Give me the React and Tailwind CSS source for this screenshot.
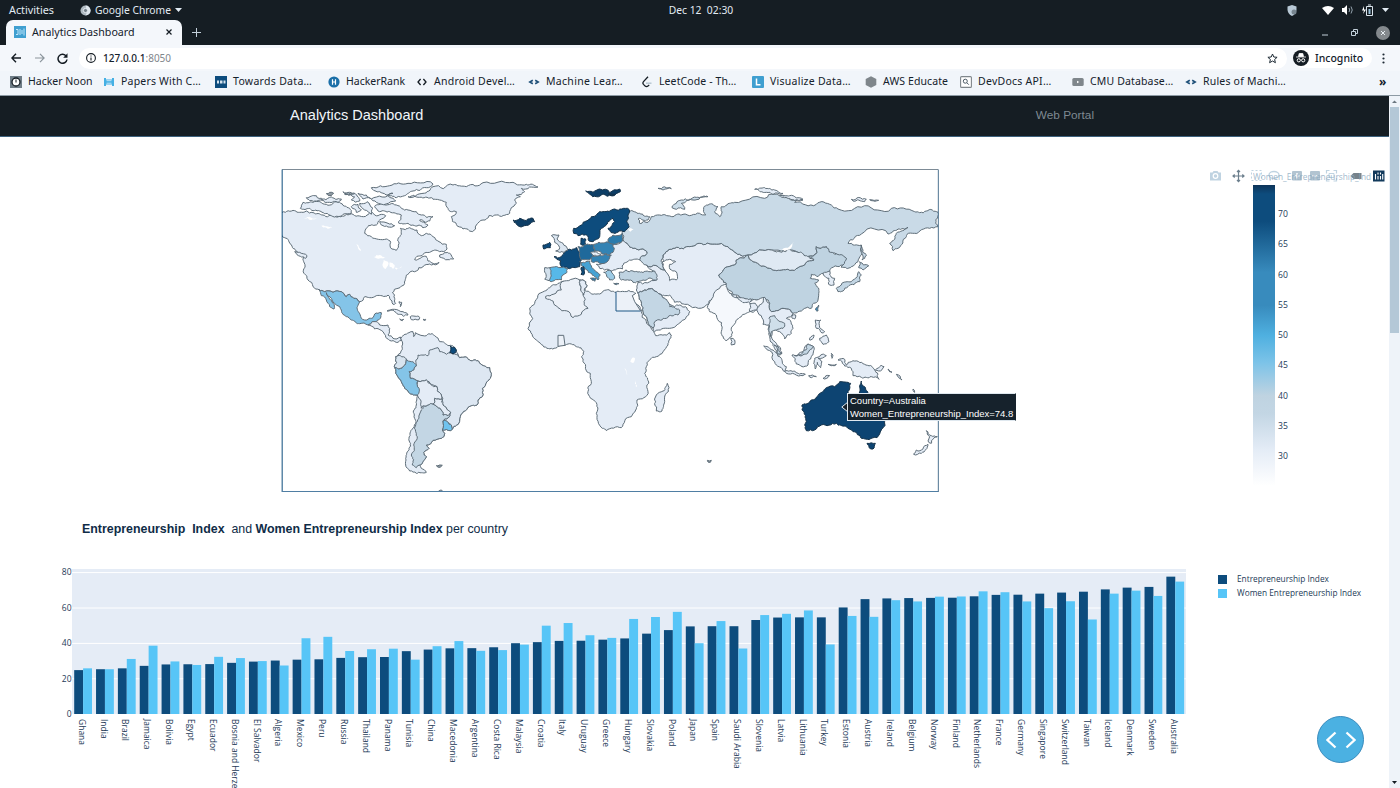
import React from "react";

const UI = "font-['Noto_Sans',sans-serif]";

/* ---------- map geometry ---------- */
const WEST = 0;
const MID = 660;
const EAST = 1305;
const LAND = "#e4ecf6";
const DARK = "#0d4c7d";
const PALE = "#cddeea";

// [x offset, fill, outline points]
const SHAPES = [
  [WEST, LAND, "7,142 45,137 60,142 80,138 100,143 130,150 165,152 200,148 240,153 262,150 270,138 285,150 305,148 318,152 300,165 290,180 262,188 255,205 275,215 320,222 333,232 337,252 350,256 358,235 355,220 365,208 362,190 390,188 412,195 425,212 440,205 460,215 478,230 500,238 502,252 480,260 450,262 430,268 405,284 440,274 445,288 478,292 455,300 430,305 410,318 388,325 378,340 375,355 355,370 338,383 345,400 348,415 340,418 330,400 325,390 290,392 270,398 255,395 240,410 222,400 210,388 200,395 185,380 160,382 135,380 118,374 100,365 85,345 73,325 72,290 72,275 55,262 35,240 15,218 7,213"],
  [WEST, LAND, "385,95 430,85 460,65 520,60 560,65 610,53 700,52 740,58 775,66 725,70 735,80 710,90 722,95 705,105 710,115 700,125 690,145 650,150 610,165 590,180 578,200 550,192 530,178 515,155 530,140 505,130 500,112 480,105 455,98 420,97"],
  [WEST, LAND, "285,125 310,115 350,120 385,135 410,140 425,150 460,155 450,168 420,165 445,180 430,188 405,182 385,175 355,172 365,150 330,140 300,140"],
  [WEST, LAND, "275,68 330,62 385,55 460,57 440,68 400,78 375,92 350,98 320,95 340,85 300,80"],
  [WEST, LAND, "62,130 70,112 100,112 140,118 180,112 210,130 215,145 190,148 150,150 120,138 90,130"],
  [WEST, LAND, "80,98 110,92 130,103 105,108"],
  [WEST, LAND, "125,105 150,97 185,102 180,108 150,112"],
  [WEST, LAND, "195,88 225,85 235,95 240,108 215,105 225,96"],
  [WEST, LAND, "235,85 260,90 275,102 340,100 348,108 290,112 250,102"],
  [WEST, LAND, "240,115 262,110 280,130 275,148 255,135"],
  [WEST, LAND, "215,125 235,118 245,135 230,142"],
  [WEST, LAND, "300,170 325,175 345,182 325,186 305,180"],
  [WEST, "#8f9aa2", "140,86 150,82 162,85 155,92"],
  [WEST, LAND, "190,80 210,82 225,86 200,86"],
  [WEST, LAND, "480,270 495,262 510,265 522,282 505,284 480,276"],
  [WEST, LAND, "45,260 60,262 82,272 78,280 62,274"],
  [WEST, "#84c4e8", "118,374 135,380 160,382 185,380 200,395 210,388 222,400 240,410 236,440 245,460 265,463 280,458 285,447 305,443 302,460 290,470 265,480 240,476 215,465 192,450 185,435 170,420 155,400 140,383 150,402 163,432 150,425 140,405 125,392"],
  [WEST, LAND, "265,480 290,470 300,480 325,480 330,490 325,510 340,520 362,516 366,526 355,532 335,528 318,517 310,500 285,492"],
  [WEST, LAND, "322,438 345,433 370,440 385,450 360,448 345,440"],
  [WEST, LAND, "392,455 420,458 418,464 395,464"],
  [WEST, LAND, "430,463 438,463 437,466"],
  [WEST, LAND, "360,462 372,463 368,467"],
  [WEST, LAND, "358,410 366,412 362,425"],
  [WEST, LAND, "365,525 372,510 388,503 400,500 402,515 407,503 430,512 465,512 480,530 508,542 522,545 530,555 540,578 570,585 600,595 630,608 635,625 622,650 608,670 608,695 592,720 565,727 548,745 540,765 518,792 512,797 488,795 495,805 485,820 460,826 440,840 448,850 432,862 440,875 430,890 420,900 425,910 440,922 410,925 390,918 378,900 378,880 388,850 388,820 400,790 404,750 410,720 413,690 385,678 365,650 345,608 348,575 362,565 368,550"],
  [WEST, "#dde7f2", "535,570 525,567 500,568 480,560 475,548 450,555 445,572 415,570 410,600 388,620 392,640 415,648 440,645 455,658 472,665 485,690 490,720 500,728 513,742 490,768 515,780 518,792 540,765 548,745 565,727 592,720 608,695 608,670 622,650 635,625 630,608 600,595 570,585 540,578"],
  [WEST, "#c3d6e4", "432,722 460,717 485,735 490,750 505,752 513,742 490,768 488,795 495,805 485,820 460,826 440,840 448,850 432,862 440,875 430,890 420,900 410,908 398,900 395,870 402,840 408,800 418,760 425,735"],
  [WEST, LAND, "415,648 440,645 472,665 485,690 487,702 465,700 460,717 432,722 425,730 413,690"],
  [WEST, LAND, "460,717 465,700 487,702 490,720 500,728 513,742 505,752 490,750 485,735"],
  [WEST, "#84c4e8", "345,608 362,610 378,595 380,582 395,590 410,600 388,620 392,640 415,648 418,670 413,690 385,678 365,650"],
  [WEST, "#d8e4ef", "348,575 362,572 380,582 378,595 362,610 345,608"],
  [WEST, "#6fc3ee", "490,768 515,780 518,792 512,797 488,795"],
  [WEST, DARK, "512,543 525,547 530,555 520,567 510,562"],
  [WEST, "#8f9aa2", "470,902 488,901 482,907"],
  [WEST, LAND, "472,981 482,975 490,980"],
  // Africa
  [MID, LAND, "185,350 215,348 240,345 258,350 262,362 255,370 270,382 300,387 320,375 349,382 375,380 400,380 408,385 398,392 405,410 425,440 440,470 462,500 468,512 510,503 515,510 505,540 470,575 440,605 435,625 447,655 445,680 412,705 408,735 395,755 365,788 320,797 308,790 290,745 282,705 267,690 275,650 272,625 250,590 253,560 230,545 215,537 196,541 175,544 142,550 110,525 85,490 90,430 105,415 135,378 158,360"],
  [MID, "#ecf1f8", "187,350 240,345 243,375 252,395 265,430 220,458 175,428 138,400 138,394 185,375"],
  [MID, LAND, "240,345 258,350 262,362 255,370 252,390 243,375"],
  [MID, LAND, "503,655 508,668 495,710 487,738 470,738 465,715 470,690 490,678"],
  // Eurasia
  [MID, LAND, "340,238 370,225 400,250 443,265 420,285 390,285 372,295 368,312 335,318 315,315 290,298 315,290"],
  [MID, LAND, "440,300 495,315 490,270 520,250 560,245 600,235 645,237 685,245 705,262 745,270 710,285 705,300 657,330 680,355 670,385 640,400 620,420 555,418 540,410 525,412 510,390 495,392 470,380 430,378 415,385 410,375 415,352 470,345 465,320 450,312"],
  [MID, "#c9dae7", "388,138 420,145 450,155 445,165 415,162 420,175 445,172 455,155 480,150 520,155 550,148 600,145 618,150 612,128 640,118 655,125 645,140 660,155 665,125 675,125 705,112 795,100 855,92 910,105 885,112 950,118 995,120 1015,132 1095,122 1175,130 1245,140 1260,143 1280,138 1315,142 1315,185 1290,190 1245,205 1222,208 1220,215 1195,250 1180,257 1170,235 1190,205 1225,187 1195,192 1165,207 1085,207 1045,235 1085,240 1085,270 1075,290 1055,305 1025,307 1040,280 1015,270 980,245 950,245 945,270 895,262 815,255 745,270 705,262 685,245 645,237 600,235 560,245 520,250 490,270 490,300 495,315 440,300 420,285 443,265 400,250 370,225 372,180"],
  [MID, "#ffffff", "488,290 510,283 528,290 510,298 515,315 532,325 530,345 510,347 503,325 490,305"],
  [MID, "#bfd3e1", "358,322 400,318 430,323 465,318 472,345 430,345 400,352 365,345"],
  [MID, LAND, "415,385 430,378 470,380 495,400 510,418 540,420 570,440 545,470 510,490 465,500 460,490 440,455 425,420"],
  [MID, "#c3d6e4", "415,385 430,378 470,380 495,400 510,425 540,435 535,450 500,460 465,470 460,490 440,455 425,420"],
  [EAST, "#bfd3e1", "12,330 60,300 65,285 100,270 115,290 165,310 200,315 250,308 298,285 275,275 300,270 305,245 335,245 360,268 395,280 385,300 345,320 325,325 310,335 290,328 287,340 312,345 300,355 313,380 310,405 290,430 250,440 235,445 215,432 190,437 170,440 165,415 150,400 125,405 80,400 55,388 35,370 35,355"],
  [EAST, "#dfe9f3", "100,270 170,255 200,262 250,262 275,272 298,285 250,308 200,315 165,310 115,290"],
  [EAST, "#f5f8fc", "15,370 35,358 45,385 60,395 105,410 125,405 150,397 130,430 105,440 80,455 52,485 50,515 35,528 20,500 5,450 -15,440 -22,428 -10,405"],
  [EAST, LAND, "50,388 80,398 110,402 105,412 75,405"],
  [EAST, LAND, "105,415 122,415 128,435 105,440"],
  [EAST, LAND, "128,428 150,397 165,415 170,440 190,437 215,432 235,445 215,460 235,490 230,505 210,522 195,500 170,495 170,515 185,535 202,565 190,570 178,545 165,515 165,480 145,478"],
  [EAST, "#cfdfea", "163,460 180,452 192,468 210,475 205,490 185,495 170,500 168,515 163,490"],
  [EAST, "#c3d6e4", "178,540 190,545 202,565 188,568"],
  [EAST, LAND, "325,325 345,318 345,330 360,340 358,360 342,358 343,340"],
  [EAST, "#c3d6e4", "365,370 380,360 410,350 428,335 432,320 440,330 435,350 400,365 385,378 370,380"],
  [EAST, "#c3d6e4", "435,290 462,303 445,315 432,308"],
  [EAST, "#c9dae7", "440,240 445,262 455,272 442,285 440,262"],
  [EAST, "#388bbd", "305,428 312,420 310,438 303,435"],
  [EAST, LAND, "232,452 243,450 240,462 233,460"],
  [EAST, LAND, "48,520 60,525 60,538 50,540"],
  [EAST, LAND, "147,543 165,550 200,580 215,605 210,620 180,590"],
  [EAST, LAND, "210,618 240,618 272,628 265,632 215,625"],
  [EAST, LAND, "232,570 250,570 280,537 297,545 290,575 280,600 245,597"],
  [EAST, "#c3d6e4", "240,572 265,560 280,537 297,545 285,555 262,572"],
  [EAST, LAND, "300,580 318,570 335,572 310,580 322,590 318,608 308,592 302,612 297,595"],
  [EAST, LAND, "350,565 355,570 352,580"],
  [EAST, LAND, "340,598 365,598 350,602"],
  [EAST, LAND, "282,632 305,635 290,638"],
  [EAST, LAND, "325,640 345,632 330,642"],
  [EAST, LAND, "302,465 318,465 315,488 330,500 322,504 305,490"],
  [EAST, LAND, "315,520 335,510 343,530 325,538"],
  [EAST, LAND, "285,525 298,510 288,525"],
  [EAST, LAND, "370,585 390,583 395,600 410,590 450,598 480,615 493,643 470,635 440,637 415,632 410,610 390,603"],
  [EAST, LAND, "482,615 500,600 508,605 492,618"],
  [EAST, LAND, "520,612 532,622 525,620"],
  [EAST, LAND, "545,628 562,645 552,638"],
  [EAST, LAND, "595,672 600,682 597,680"],
  [EAST, "#0d4472", "262,720 290,705 310,692 335,668 360,665 375,650 408,655 400,680 425,695 435,680 440,648 450,665 465,690 480,710 510,770 500,795 487,818 440,820 415,800 395,785 365,775 320,780 300,795 275,797 270,780 275,770 262,735"],
  [EAST, "#0d4472", "457,835 482,835 475,852 465,850"],
  [EAST, LAND, "635,797 650,812 668,815 650,835 640,828 645,815"],
  [EAST, LAND, "640,838 620,865 597,868 605,855"],
  [EAST, LAND, "120,73 150,68 180,75 205,85 175,88 155,82"],
  [EAST, LAND, "195,90 225,92 265,103 240,106 210,98"],
  [EAST, LAND, "410,103 455,103 450,110 415,108"],
  [EAST, LAND, "465,104 492,106 480,109"],
  // Europe
  [MID, DARK, "222,190 245,180 275,155 310,140 345,132 388,133 385,150 388,185 375,200 335,203 325,190 345,170 340,160 325,170 305,190 300,215 280,230 268,228 260,210 235,212 222,205"],
  [MID, DARK, "244,220 258,222 256,240 243,238"],
  [MID, DARK, "163,275 185,275 215,255 232,248 240,262 245,285 240,305 205,310 185,305 183,287"],
  [MID, "#1f699b", "235,245 262,237 282,240 285,258 280,277 245,285 240,262"],
  [MID, "#3383b4", "282,238 315,233 340,238 340,262 330,270 285,258"],
  [MID, "#2b7bac", "325,230 340,210 368,205 368,228 345,238"],
  [MID, "#3383b4", "275,277 305,272 335,270 325,288 300,295 275,290"],
  [MID, "#e9eff7", "272,263 290,260 305,267 295,273 280,272"],
  [MID, "#57b8e8", "150,308 205,310 190,330 185,345 150,348"],
  [MID, "#d3e1ed", "135,308 150,308 148,347 135,342"],
  [MID, "#45a2d3", "240,290 270,288 272,298 285,315 302,330 295,345 285,335 262,315 245,302"],
  [MID, DARK, "244,308 252,305 252,330 244,328"],
  [MID, "#2b7bac", "272,340 290,342 285,349"],
  [MID, "#9dcbe5", "312,322 335,318 345,340 330,345"],
  [MID, "#2b7bac", "342,355 358,356 350,359"],
  [MID, "#dbe6f1", "155,212 178,210 172,222 190,235 205,255 180,262 168,258 180,248 165,232"],
  [MID, DARK, "130,240 150,232 152,248 132,252"],
  [MID, "#0d3e66", "40,165 60,160 100,160 105,170 90,178 50,177"],
  [MID, "#0d3e66", "258,78 300,72 360,72 362,80 310,87 290,95 270,88"],
  [MID, "#0d3e66", "325,86 345,88 335,91"],
  [MID, PALE, "517,128 545,105 590,97 625,95 580,105 545,115 555,133 530,133"],
  [MID, PALE, "475,70 515,71 490,75"],
  [MID, "#8f9aa2", "623,886 635,886 632,892 625,891"],
];

const LAKES = [
  "72,160 95,158 112,162 95,165", "125,182 140,184 158,188 140,188", "230,238 240,250 244,258 236,252",
  "283,276 300,270 318,276 302,280", "312,285 325,290 318,312 310,305", "330,292 345,300 340,312 330,305", "345,308 368,304 350,314",
  "1058,578 1066,580 1060,594 1052,590", "1035,608 1044,628 1040,628", "1067,645 1072,666 1068,664",
  "1500,253 1525,248 1543,230 1535,248 1515,258", "1045,190 1062,192 1052,200",
];

const noise = (a, b, c, d) => {
  const s = Math.sin(a * 12.9898 + b * 78.233 + c * 37.719 + d * 4.581) * 43758.5453;
  return s - Math.floor(s) - 0.5;
};

// Splits an edge at displaced midpoints; the result is the same in both directions,
// so neighbouring countries share one border.
function split(p, q, depth, out) {
  const dx = q[0] - p[0];
  const dy = q[1] - p[1];
  const len = Math.hypot(dx, dy);
  if (depth === 0 || len < 7) {
    out.push(q);
    return;
  }
  const forward = p[0] < q[0] || (p[0] === q[0] && p[1] < q[1]);
  const [a, b] = forward ? [p, q] : [q, p];
  const n = noise(a[0], a[1], b[0], b[1]) * 0.4 * (forward ? 1 : -1);
  const m = [(p[0] + q[0]) / 2 - dy * n, (p[1] + q[1]) / 2 + dx * n];
  split(p, m, depth - 1, out);
  split(m, q, depth - 1, out);
}

function coast(dx, text) {
  const pts = text.split(" ").map((s) => {
    const [x, y] = s.split(",").map(Number);
    return [x + dx, y];
  });
  const out = [];
  pts.forEach((p, i) => split(p, pts[(i + 1) % pts.length], 3, out));
  return "M" + out.map((p) => p[0].toFixed(1) + "," + p[1].toFixed(1)).join("L") + "Z";
}

function WorldMap() {
  return (
    <svg width="659" height="326" viewBox="4 9 1977 978" className="block">
      <clipPath id="frame"><rect x="7" y="12" width="1970" height="969" /></clipPath>
      <g clipPath="url(#frame)" strokeLinejoin="round">
        {SHAPES.map(([dx, fill, pts], i) => (
          <path key={i} d={coast(dx, pts)} fill={fill} strokeWidth="3" stroke={fill.startsWith("#0d") ? "#14324a" : "#5f6e79"} />
        ))}
        <path d="M1009,382V438H1083L1058,392L1068,383Z" fill="#ecf1f8" />
        <path d="M1009,380V438H1083" fill="none" stroke="#1d5685" strokeWidth="3" />
        <path d="M1083,438L1065,410L1058,392L1068,385" fill="none" stroke="#5f6e79" strokeWidth="3" />
        <path d="M835,511H852L856,541L835,544Z" fill="#ecf1f8" stroke="#5f6e79" strokeWidth="3" />
        {LAKES.map((l) => <path key={l} d={coast(0, l)} fill="#fff" />)}
      </g>
      <path d="M7.500 13.500H1975.500" stroke="#7d8b96" strokeWidth="3" />
      <path d="M7.500 13.500V981" stroke="#0d4c7d" strokeWidth="3" />
      <path d="M7.500 979.500H1975.500" stroke="#4f7ea3" strokeWidth="3" />
      <path d="M1976 13.500V981" stroke="#4f7491" strokeWidth="3" />
    </svg>
  );
}

/* ---------- bar chart ---------- */
const ROWS = [
  ["Ghana", 24.8, 25.8], ["India", 25.3, 25.3], ["Brazil", 25.8, 31.1], ["Jamaica", 27.2, 38.6], ["Bolivia", 28, 29.7],
  ["Egypt", 28.1, 27.7], ["Ecuador", 28.2, 32.3], ["Bosnia and Herze", 28.9, 31.6], ["El Salvador", 29.6, 29.9],
  ["Algeria", 30.2, 27.4], ["Mexico", 30.7, 42.8], ["Peru", 30.9, 43.6], ["Russia", 31.7, 35.6], ["Thailand", 32.1, 36.6],
  ["Panama", 32.2, 36.9], ["Tunisia", 35.5, 30.7], ["China", 36.4, 38.3], ["Macedonia", 37.1, 41.2], ["Argentina", 37.2, 35.7],
  ["Costa Rica", 37.7, 36.1], ["Malaysia", 40, 39.2], ["Croatia", 40.6, 49.9], ["Italy", 41.3, 51.4], ["Uruguay", 41.4, 44.5],
  ["Greece", 42, 43], ["Hungary", 42.7, 53.7], ["Slovakia", 45.4, 54.8], ["Poland", 47.4, 57.7], ["Japan", 49.5, 40],
  ["Spain", 49.6, 52.5], ["Saudi Arabia", 49.6, 37], ["Slovenia", 53.1, 55.9], ["Latvia", 54.5, 56.6], ["Lithuania", 54.6, 58.5],
  ["Turkey", 54.6, 39.3], ["Estonia", 60.2, 55.4], ["Austria", 64.9, 54.9], ["Ireland", 65.3, 64.3], ["Belgium", 65.5, 63.6],
  ["Norway", 65.6, 66.3], ["Finland", 65.7, 66.4], ["Netherlands", 66.5, 69.3], ["France", 67.3, 68.8], ["Germany", 67.4, 63.6],
  ["Singapore", 68, 59.8], ["Switzerland", 68.6, 63.7], ["Taiwan", 69.1, 53.4], ["Iceland", 70.4, 68], ["Denmark", 71.4, 69.7],
  ["Sweden", 71.8, 66.7], ["Australia", 77.6, 74.8],
];

function BarChart() {
  const step = 1114 / 51;
  const k = 1.77;
  const base = 154;
  return (
    <svg width="1200" height="228" className="block font-['Open_Sans',sans-serif] text-[8.5px]" fill="#1d3a57">
      <rect x="72" y="9" width="1114" height="145" fill="#e5ecf6" />
      {[20, 40, 60, 80].map((v) => (
        <line key={v} x1="72" x2="1186" y1={base + 0.2 - v * k} y2={base + 0.2 - v * k} stroke="#fff" />
      ))}
      {ROWS.map(([name, a, b], i) => {
        const x = 72 + i * step + 2.2;
        return (
          <g key={name}>
            <rect x={x} y={base - a * k} width="8.9" height={a * k} fill="#0d4c7d" />
            <rect x={x + 8.9} y={base - b * k} width="8.9" height={b * k} fill="#57c5f7" />
            <text transform={`translate(${x + 4.6} 159) rotate(90)`}>{name}</text>
          </g>
        );
      })}
      {[0, 20, 40, 60, 80].map((v) => (
        <text key={v} x="71.500" y={base + 3 - v * k} textAnchor="end">{v}</text>
      ))}
    </svg>
  );
}

/* ---------- browser chrome ---------- */
function Mark({ kind }) {
  const p = { width: 12, height: 12, viewBox: "0 0 12 12", className: "shrink-0" };
  switch (kind) {
    case "clock":
      return <svg {...p}><rect width="12" height="12" fill="#6f7d87" /><circle cx="6" cy="6" r="4" fill="#fff" stroke="#141c23" strokeWidth="1.3" /><path d="M6 3.5V6.5" stroke="#141c23" /></svg>;
    case "papers":
      return <svg {...p}><path d="M1 2h2v1.500h6V2h2v8H9V8.500H3V10H1Z" fill="#45b0e4" /><path d="M3.500 4.700h5M3.500 7.200h5" stroke="#e4f3fb" strokeWidth=".8" /></svg>;
    case "tds":
      return <svg {...p}><rect width="12" height="12" fill="#0d4c7d" /><path d="M2 4.500h2v3H2zM5 4.500h2.500v3H5zM8.500 4.500h2v3h-2z" fill="#d6e4ef" /></svg>;
    case "hrank":
      return <svg {...p}><circle cx="6" cy="6" r="5.600" fill="#1b6fa8" /><path d="M4.500 3.200v5.600M7.500 3.200v5.600M4.500 6h3" stroke="#fff" strokeWidth="1.200" /></svg>;
    case "code":
      return <svg {...p}><path d="M4.600 3 2 6l2.600 3M7.400 3 10 6 7.400 9" fill="none" stroke="#141c23" strokeWidth="1.300" /></svg>;
    case "arrows":
      return <svg {...p}><path d="M4.800 4.200 1.800 6l3 1.800M7.200 4.200 10.200 6l-3 1.800" fill="none" stroke="#1d4f78" strokeWidth="1.600" /></svg>;
    case "leet":
      return <svg {...p}><path d="M7 .8 2.500 5.600q-1.200 1.400 0 2.800l1.600 1.700q1.400 1.200 2.900 0l1.200-1.200" fill="none" stroke="#141c23" strokeWidth="1.300" /><path d="M5 7.200h5.500" stroke="#b4c4d0" strokeWidth="1.400" /></svg>;
    case "viz":
      return <svg {...p}><rect width="12" height="12" rx="1" fill="#3f9fd0" /><path d="M4.500 2.500v6.300h4" fill="none" stroke="#fff" strokeWidth="1.500" /></svg>;
    case "hex":
      return <svg {...p}><path d="M6 .3 11.300 3v6L6 11.700.7 9V3Z" fill="#7f868b" /></svg>;
    case "docs":
      return <svg {...p}><rect x=".6" y=".6" width="10.800" height="10.800" rx="1" fill="#fff" stroke="#7f868b" strokeWidth="1.100" /><circle cx="5.300" cy="5.200" r="2" fill="none" stroke="#4d5b66" /><path d="m6.800 6.700 2 2" stroke="#4d5b66" /></svg>;
    default:
      return <svg {...p}><rect x=".3" y="2" width="11.400" height="8" rx="1.500" fill="#7f868b" /><path d="M5 4.700 7.300 6 5 7.300Z" fill="#fff" /></svg>;
  }
}

function Bookmark({ kind, label, className }) {
  return (
    <div className={"flex shrink-0 items-center gap-1.5 " + className}>
      <Mark kind={kind} />
      <span className="whitespace-pre">{label}</span>
    </div>
  );
}

function Browser() {
  return (
    <div className={UI + " text-[10.5px] leading-none text-[#14212b]"}>
      <div className="grid h-5 grid-cols-3 items-center bg-[#151d23] text-[10.3px] text-[#e2ebf3]">
        <div className="flex items-center pl-[9px]">
          <span className="w-[71px] text-[10.8px]">Activities</span>
          <svg width="11" height="11" viewBox="0 0 12 12" className="mr-1"><circle cx="6" cy="6" r="5.500" fill="#aeb9c1" /><path d="M6 .5a5.500 5.500 0 0 1 0 11L8 7Z" fill="#dfe7ee" /><circle cx="6" cy="6" r="2.300" fill="#76828b" stroke="#e8eef4" /></svg>
          <span>Google Chrome</span>
          <svg width="7" height="4" className="ml-1"><path d="M0 0h7L3.500 4Z" fill="#e2ebf3" /></svg>
        </div>
        <div className="pl-0.5 text-center whitespace-pre">{"Dec 12  02:30"}</div>
        <div className="flex items-center justify-end pr-[11px]">
          <svg width="11" height="11" viewBox="0 0 11 11" className="mr-[24px]"><path d="M5 0 9.500 1.500V5Q9 9 5 11 1 9 .5 5V1.500Z" fill="#b8c9d6" /><circle cx="7" cy="7" r="2.500" fill="#77858f" /></svg>
          <svg width="12" height="9" className="mr-[8px]"><path d="M0 2Q6-2 12 2L6 9Z" fill="#fff" /></svg>
          <svg width="12" height="10" className="mr-2"><path d="M0 3h2l3-3v10L2 7H0Z" fill="#fff" /><path d="M7 3q1.500 2 0 4M9 1.500q2.500 3.500 0 7" fill="none" stroke="#93a2ad" /></svg>
          <svg width="11" height="12" className="mr-[9px]"><path d="M2 2 0 6.500h2L1 10l3-4.500H2Z" fill="#fff" /><path d="M4.500 2.500h6v9h-6zM6 1h3" fill="none" stroke="#dce6ee" /><path d="M6.500 5h2v5h-2z" fill="#9cc4dc" /></svg>
          <svg width="7" height="4"><path d="M0 0h7L3.500 4Z" fill="#e2ebf3" /></svg>
        </div>
      </div>

      <div className="flex h-[25px] items-center bg-[#151d23]">
        <div className="ml-1.5 flex h-full w-[176px] items-center rounded-t-[7px] bg-[#f4f7fb] pr-2.5 pb-px pl-2 text-[10.7px]">
          <svg width="12" height="12" className="mr-1.5"><rect width="12" height="12" fill="#3f9fd0" /><path d="M2 3.500h2v5H2M6 3v6M8 4v4M10 2.500v7" fill="none" stroke="#bfe6fa" /></svg>
          <span className="flex-1">Analytics Dashboard</span>
          <svg width="6" height="6" viewBox="0 0 6 6"><path d="m.5.5 5 5m0-5-5 5" stroke="#141c23" strokeWidth="1.200" /></svg>
        </div>
        <svg width="9" height="9" className="ml-[10px]"><path d="M4.500 0v9M0 4.500h9" stroke="#c3d0da" /></svg>
        <div className="ml-auto flex items-center pr-[10px]">
          <svg width="6" height="2" className="mt-1 mr-[23px]"><path d="M0 1h6" stroke="#c3d0da" /></svg>
          <svg width="7" height="7" className="mr-[18px]"><path d="M.5 2.500h4v4h-4zM2.500 2V.5h4v4H5" fill="none" stroke="#c3d0da" /></svg>
          <svg width="14" height="14"><circle cx="7" cy="7" r="7" fill="#84898d" /><path d="m5 5 4 4m0-4-4 4" stroke="#e7edf2" /></svg>
        </div>
      </div>

      <div className="flex h-[26px] items-center bg-[#f4f7fb]">
        <div className="flex items-center pl-[11px]">
          <svg width="10" height="10" viewBox="0 0 10 10" fill="none" stroke="#141c23" strokeWidth="1.400" className="mr-[14px]"><path d="M10 5H1M5 .8.900 5 5 9.200" /></svg>
          <svg width="10" height="10" viewBox="0 0 10 10" fill="none" stroke="#8b959c" strokeWidth="1.200" className="mr-[12px]"><path d="M0 5h9M5 .8 9.100 5 5 9.200" /></svg>
          <svg width="11" height="11" viewBox="0 0 11 11" className="mr-[11px]"><path d="M9.300 3.300A4.500 4.500 0 1 0 10 6.500" fill="none" stroke="#141c23" strokeWidth="1.500" /><path d="M10.500.3v4.400H6.200Z" fill="#141c23" /></svg>
        </div>
        <div className="flex h-[21px] w-[1208px] items-center rounded-full bg-white pr-[9px] pl-[7px]">
          <svg width="10" height="10" viewBox="0 0 10 10" className="mr-[7px]"><circle cx="5" cy="5" r="4.400" fill="none" stroke="#141c23" strokeWidth="1.100" /><path d="M5 4.400v3M5 2.500v1" stroke="#141c23" strokeWidth="1.100" /></svg>
          <span className="flex-1 text-[10px]"><span className="font-medium">127.0.0.1</span><span className="text-[#7f868b]">:8050</span></span>
          <svg width="11" height="11" viewBox="0 0 11 11"><path d="m5.500 1 1.300 3 3.300.3-2.500 2.200.8 3.200-2.900-1.700-2.900 1.700.8-3.200L.9 4.300 4.200 4Z" fill="none" stroke="#1d2a34" /></svg>
        </div>
        <div className="ml-[6px] flex h-[20px] w-[79px] items-center rounded-full bg-white">
          <svg width="16" height="16" viewBox="0 0 16 16" className="mr-[6px]"><circle cx="8" cy="8" r="8" fill="#141c23" /><path d="M3 7h10M5.500 6.500 6.200 3.500h3.600l.7 3Z" fill="#fff" stroke="#fff" strokeWidth=".8" /><circle cx="5.800" cy="10.300" r="1.600" fill="none" stroke="#fff" /><circle cx="10.200" cy="10.300" r="1.600" fill="none" stroke="#fff" /></svg>
          <span className="font-medium">Incognito</span>
        </div>
        <svg width="3" height="11" className="ml-[10px]" fill="#1d2a34"><circle cx="1.500" cy="1.500" r="1.100" /><circle cx="1.500" cy="5.500" r="1.100" /><circle cx="1.500" cy="9.500" r="1.100" /></svg>
      </div>

      <div className="flex h-[25px] items-center border-b border-[#8d9aa4] bg-[#f1f5fa] pb-[3px] pl-2.5">
        <Bookmark kind="clock" label="Hacker Noon" className="w-[93px]" />
        <Bookmark kind="papers" label="Papers With C…" className="w-[112px] tracking-[0.2px]" />
        <Bookmark kind="tds" label="Towards Data…" className="w-[113px] tracking-[0.3px]" />
        <Bookmark kind="hrank" label="HackerRank" className="w-[88px]" />
        <Bookmark kind="code" label="Android Devel…" className="w-[112px] tracking-[0.25px]" />
        <Bookmark kind="arrows" label="Machine Lear…" className="w-[113px] tracking-[0.3px]" />
        <Bookmark kind="leet" label="LeetCode - Th…" className="w-[111px] tracking-[0.1px]" />
        <Bookmark kind="viz" label="Visualize Data…" className="w-[113px] tracking-[0.25px]" />
        <Bookmark kind="hex" label="AWS Educate" className="w-[95px] tracking-[0.1px]" />
        <Bookmark kind="docs" label="DevDocs API…" className="w-[112px] tracking-[0.25px]" />
        <Bookmark kind="video" label="CMU Database…" className="w-[113px] tracking-[0.15px]" />
        <Bookmark kind="arrows" label="Rules of Machi…" className="w-[194px] tracking-[0.2px]" />
        <span className="text-[12px] font-bold">»</span>
      </div>
    </div>
  );
}

/* ---------- dashboard ---------- */
function ModeBar() {
  return (
    <svg width="180" height="16" viewBox="1205 169 180 16" className="block" fill="none">
      <path d="M1210 173.500h2.500l1-1.500h4l1 1.500h2.500v8h-11Z" fill="#bfd3e1" /><circle cx="1215.500" cy="177" r="2.300" stroke="#fff" strokeWidth="1.200" />
      <path d="M1238.500 171.500v11M1233 177h11M1237 173l1.500-1.700 1.500 1.700M1237 181l1.500 1.700 1.500-1.700M1234.700 175.500l-1.700 1.500 1.700 1.500M1242.300 175.500l1.700 1.500-1.700 1.500" stroke="#6c7f8d" strokeWidth="1.200" />
      <rect x="1251.500" y="171.500" width="10" height="10" stroke="#bfd3e1" strokeDasharray="2 2" />
      <ellipse cx="1274" cy="176" rx="5" ry="3.500" stroke="#bfd3e1" strokeWidth="1.300" /><path d="M1271 179l-1 3" stroke="#bfd3e1" />
      <rect x="1292" y="172" width="10" height="9.500" rx="1" fill="#b2c4d1" /><path d="M1297 174v5.500M1294.300 176.800h5.400" stroke="#fff" strokeWidth="1.400" />
      <rect x="1310" y="172" width="10" height="9.500" rx="1" fill="#b2c4d1" /><path d="M1312.300 176.800h5.400" stroke="#fff" strokeWidth="1.400" />
      <path d="M1326.500 174.500v-3h3M1333.500 171.500h3v3M1336.500 179v3h-3M1329.500 182h-3v-3" stroke="#bfd3e1" strokeWidth="1.200" /><path d="M1329 174.500h5v4h-5z" stroke="#bfd3e1" />
      <path d="m1350.500 177 3-3h8v6h-8Z" fill="#76828b" />
      <rect x="1373" y="171.500" width="11.500" height="11" fill="#123a5c" /><path d="M1375.500 175v5.500M1378 173.500v2M1378 177v3.500M1380.500 173.500v2M1380.500 177v3.500M1382.700 175v5.500" stroke="#fff" strokeWidth="1.100" />
    </svg>
  );
}

function ColorScale() {
  return (
    <div className="flex gap-[3px] font-['Open_Sans',sans-serif] text-[8.6px] leading-none text-[#1d3a57]">
      <div className="h-[301px] w-[22px] bg-[linear-gradient(to_bottom,#0d3459_0%,#0d4c7d_3%,#0d4c7d_12%,#388bbd_29%,#388bbd_40%,#4fb0e0_50%,#7cc3e8_59%,#bfd3e1_70%,#c3d6e4_76%,#e4ecf6_88%,#ffffff_100%)]" />
      <div className="flex flex-col gap-[21.7px] pt-[25px]">
        {[70, 65, 60, 55, 50, 45, 40, 35, 30].map((v) => <span key={v}>{v}</span>)}
      </div>
    </div>
  );
}

function Tooltip() {
  return (
    <div className="absolute top-[225px] left-[560px] flex items-center font-['Liberation_Sans',sans-serif] text-[9.5px] leading-[12.6px] whitespace-nowrap text-white">
      <svg width="7" height="12" className="-mr-px"><path d="M7 1 .8 6 7 11" fill="#16222c" stroke="#dfe8ef" /></svg>
      <div className="h-[28px] w-[169px] border border-[#dfe8ef] border-r-[#16222c] bg-[#16222c] pt-px pl-[2px]">
        <div>Country=Australia</div>
        <div>Women_Entrepreneurship_Index=74.8</div>
      </div>
    </div>
  );
}

export default function App() {
  return (
    <div className="flex h-[788px] w-[1400px] flex-col overflow-hidden bg-white">
      <Browser />
      <div className="flex min-h-0 flex-1">
        <main className="w-[1389px] overflow-hidden font-['Liberation_Sans',sans-serif]">
          <header className="flex h-[41px] items-center justify-between border-b border-[#3d617d] bg-[#151d23] pr-[295px] pl-[290px]">
            <h1 className="text-[14.55px] text-[#f1f6fa]">Analytics Dashboard</h1>
            <span className="text-[11.8px] text-[#7f8a92]">Web Portal</span>
          </header>

          <section className="flex h-[383px] pt-[31px]">
            <div className="relative ml-[281px] h-[326px] w-[659px]">
              <WorldMap />
              <Tooltip />
            </div>
            <div className="ml-[265px] w-[180px]">
              <div className="relative h-[17px]">
                <ModeBar />
                <span className="absolute top-[4px] left-[48px] font-['Open_Sans',sans-serif] text-[8.3px] leading-[10px] text-[#8ba9bf] opacity-80">Women_Entrepreneurship_Ind</span>
              </div>
              <div className="pl-[48px]"><ColorScale /></div>
            </div>
          </section>

          <p className="h-[40px] pl-[82px] text-[12.4px] leading-[18px] whitespace-pre text-[#0f2c47]">
            <b>{"Entrepreneurship  Index"}</b>{"  and "}<b>Women Entrepreneurship Index</b> per country
          </p>

          <section className="flex h-[228px]">
            <BarChart />
            <div className="flex w-[180px] shrink-0 flex-col items-end justify-between pt-[13px] pb-[25px]">
              <div className="mr-auto ml-[18px] flex flex-col gap-[1px] font-['Open_Sans',sans-serif] text-[8.3px] text-[#1d3a57]">
                <div className="flex h-[13px] items-center gap-[10px]"><span className="size-[9px] bg-[#0d4c7d]" /><span className="whitespace-nowrap">Entrepreneurship Index</span></div>
                <div className="flex h-[13px] items-center gap-[10px]"><span className="size-[9px] bg-[#57c5f7]" /><span className="whitespace-nowrap">Women Entrepreneurship Index</span></div>
              </div>
              <button className="mr-[16px] flex size-[47px] items-center justify-center rounded-full border border-[#388bbd] bg-[#4bb1e2]">
                <svg width="30" height="18" viewBox="0 0 30 18" fill="none" stroke="#fff" strokeWidth="2.300"><path d="M9.500 1.500 1.500 9l8 7.500M20.500 1.500l8 7.500-8 7.500" /></svg>
              </button>
            </div>
          </section>
        </main>
        <div className="flex w-[11px] flex-col items-center bg-[#eef3f9]">
          <svg width="11" height="11"><path d="M3 7h5L5.500 4.500Z" fill="#6b7780" /></svg>
          <div className="h-[226px] w-[9px] bg-[#b4c8d7]" />
          <svg width="11" height="11" className="mt-auto"><path d="M3 4h5L5.500 7Z" fill="#141c23" /></svg>
        </div>
      </div>
    </div>
  );
}
